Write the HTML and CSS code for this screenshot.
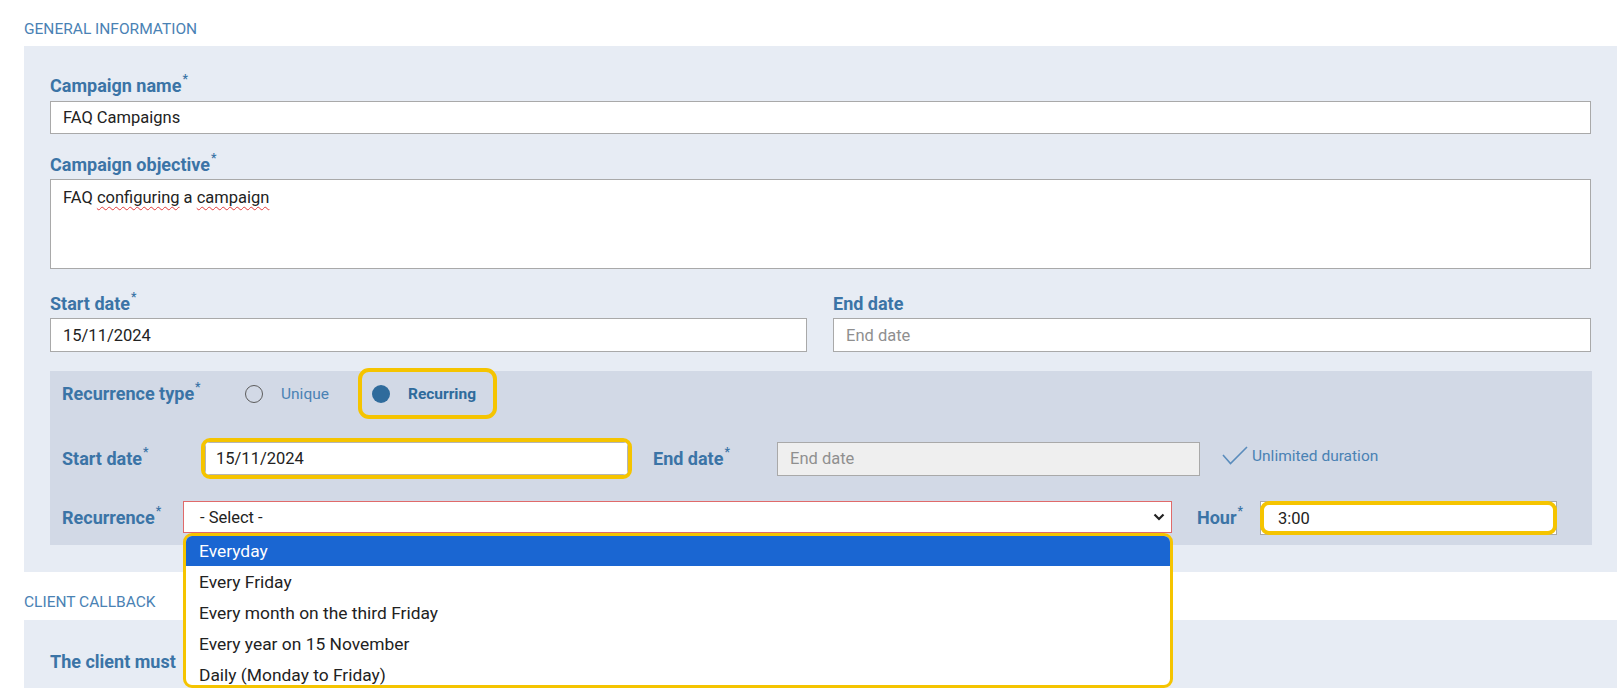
FILE: index.html
```html
<!DOCTYPE html>
<html>
<head>
<meta charset="utf-8">
<link rel="stylesheet" href="styles.css">
</head>
<body>
<div class="section-title">GENERAL INFORMATION</div>
<div class="panel">
  <div class="label l-name">Campaign name<sup>*</sup></div>
  <div class="input in-name">FAQ Campaigns</div>

  <div class="label l-obj">Campaign objective<sup>*</sup></div>
  <div class="textarea">FAQ <span class="spell">configuring</span> a <span class="spell">campaign</span></div>

  <div class="dates">
    <div class="date-col">
      <div class="label">Start date<sup>*</sup></div>
      <div class="input in-date">15/11/2024</div>
    </div>
    <div class="date-col">
      <div class="label">End date</div>
      <div class="input in-date placeholder">End date</div>
    </div>
  </div>

  <div class="rec">
    <div class="rec-row r1">
      <div class="label rl-type">Recurrence type<sup>*</sup></div>
      <div class="radio-opt">
        <span class="radio"></span>
        <span class="radio-text">Unique</span>
      </div>
      <div class="radio-opt hl-radio">
        <span class="radio checked"></span>
        <span class="radio-text bold">Recurring</span>
      </div>
    </div>

    <div class="rec-row r2">
      <div class="label rl-start">Start date<sup>*</sup></div>
      <div class="hl hl-start"><div class="input in-hl">15/11/2024</div></div>
      <div class="label rl-end">End date<sup>*</sup></div>
      <div class="input in-end placeholder">End date</div>
      <svg class="check" width="26" height="19" viewBox="0 0 26 19"><path d="M1 9 L8.5 17.5 L25 1" fill="none" stroke="#5a8cbc" stroke-width="1.6"/></svg>
      <span class="unlimited">Unlimited duration</span>
    </div>

    <div class="rec-row r3">
      <div class="label rl-rec">Recurrence<sup>*</sup></div>
      <div class="select-wrap">
        <div class="select">
          <span>- Select -</span>
          <svg class="chev" width="12" height="8" viewBox="0 0 12 8"><path d="M1.5 1.5 L6 6 L10.5 1.5" fill="none" stroke="#222" stroke-width="2.2"/></svg>
        </div>
        <ul class="dropdown">
          <li class="active">Everyday</li>
          <li>Every Friday</li>
          <li>Every month on the third Friday</li>
          <li>Every year on 15 November</li>
          <li>Daily (Monday to Friday)</li>
        </ul>
      </div>
      <div class="label rl-hour">Hour<sup>*</sup></div>
      <div class="hour-wrap">
        <div class="input in-hour">3:00</div>
        <div class="hl hl-hour"></div>
      </div>
    </div>
  </div>
</div>

<div class="section-title st2">CLIENT CALLBACK</div>
<div class="panel panel2">
  <div class="label l-client">The client must</div>
</div>
</body>
</html>
```
FILE: styles.css
```css
* { box-sizing: border-box; }
html, body { margin: 0; padding: 0; }
body {
  font-family: Roboto, "Liberation Sans", Arial, sans-serif;
  background: #ffffff;
  color: #222;
  width: 1617px;
  height: 688px;
  overflow: hidden;
}
.section-title {
  height: 46px;
  padding: 20px 0 0 24px;
  font-size: 15.5px;
  line-height: 18px;
  color: #4a82b4;
}
.st2 { height: 48px; padding-top: 21px; }
.panel {
  margin-left: 24px;
  background: #e7ecf4;
  padding: 29px 26px 27px 26px;
}
.panel2 { height: 200px; padding-top: 31px; }
.label {
  font-size: 18px;
  line-height: 22px;
  font-weight: 700;
  color: #3b74a6;
  white-space: nowrap;
}
.label sup {
  font-size: 12px;
  line-height: 0;
  position: relative;
  top: -2px;
  margin-left: 1px;
}
.input {
  background: #fff;
  border: 1px solid #a9a9a9;
  font-size: 16.5px;
  color: #222;
  display: flex;
  align-items: center;
  padding-left: 12px;
  white-space: nowrap;
}
.placeholder { color: #8f8f8f; }
.in-name { margin-top: 4px; height: 33px; }
.l-obj { margin-top: 20px; }
.textarea {
  margin-top: 3px;
  height: 90px;
  background: #fff;
  border: 1px solid #a9a9a9;
  font-size: 16.5px;
  line-height: 20px;
  padding: 8px 12px;
}
.spell {
  text-decoration: underline wavy #e23b3b;
  text-decoration-thickness: 1px;
  text-underline-offset: 3px;
}
.dates {
  margin-top: 24px;
  display: grid;
  grid-template-columns: 757px 1fr;
  gap: 26px;
}
.in-date { margin-top: 3px; height: 34px; }
.rec {
  margin-top: 19px;
  background: #d2d9e6;
  padding: 0 0 10px 12px;
  margin-right: -1px;
}
.rec-row { display: flex; align-items: center; }
.r1 { height: 51px; position: relative; top: -3px; margin-bottom: -3px; }
.rl-type { width: 183px; }
.radio-opt { display: flex; align-items: center; }
.radio {
  width: 18px;
  height: 18px;
  border-radius: 50%;
  border: 1.5px solid #5c5c5c;
  background: transparent;
  display: inline-block;
  flex: none;
}
.radio.checked { border: none; background: #2f6b9c; }
.radio-text {
  margin-left: 18px;
  font-size: 15.5px;
  color: #4a82b4;
}
.radio-text.bold { font-weight: 700; color: #2f6b9c; }
.hl-radio {
  margin-left: 29px;
  height: 51px;
  width: 139px;
  border: 4px solid #f5c400;
  border-radius: 11px;
  padding-left: 10px;
}
.r2 { margin-top: 19px; height: 41px; }
.rl-start { width: 139px; }
.hl {
  border: 4px solid #f5c400;
  border-radius: 9px;
}
.hl-start { width: 431px; height: 41px; overflow: hidden; }
.in-hl { height: 100%; border-color: #b5b5b5; padding-left: 10px; }
.rl-end { margin-left: 21px; width: 124px; }
.in-end { width: 423px; height: 34px; background: #efefef; }
.check { margin-left: 22px; margin-top: -6px; }
.unlimited {
  margin-left: 4px;
  margin-top: -6px;
  font-size: 15.5px;
  color: #4a82b4;
  white-space: nowrap;
}
.r3 { margin-top: 22px; height: 34px; }
.rl-rec { width: 121px; }
.select-wrap { position: relative; width: 989px; height: 32px; align-self: flex-start; }
.select {
  height: 32px;
  background: #fff;
  border: 1px solid #e06a6a;
  display: flex;
  align-items: center;
  justify-content: space-between;
  padding: 0 6px 0 16px;
  font-size: 16.5px;
  color: #222;
}
.dropdown {
  position: absolute;
  z-index: 10;
  top: 32px;
  left: 0;
  width: 990px;
  height: 155px;
  margin: 0;
  padding: 0;
  list-style: none;
  background: #fff;
  border: 3.5px solid #f5c400;
  border-radius: 9px;
  overflow: hidden;
}
.dropdown li {
  height: 31px;
  line-height: 31px;
  padding-left: 13px;
  font-size: 17.4px;
  color: #222;
  white-space: nowrap;
}
.dropdown li.active { background: #1a66d2; color: #fff; height: 30px; line-height: 30px; margin-bottom: 1px; }
.rl-hour { margin-left: 25px; width: 63px; }
.hour-wrap { position: relative; width: 297px; height: 34px; }
.in-hour { height: 100%; padding-left: 17px; border-color: #a9a9a9; }
.hl-hour {
  position: absolute;
  inset: 0;
  border-radius: 9px;
}
.l-client { line-height: 22px; }
```
